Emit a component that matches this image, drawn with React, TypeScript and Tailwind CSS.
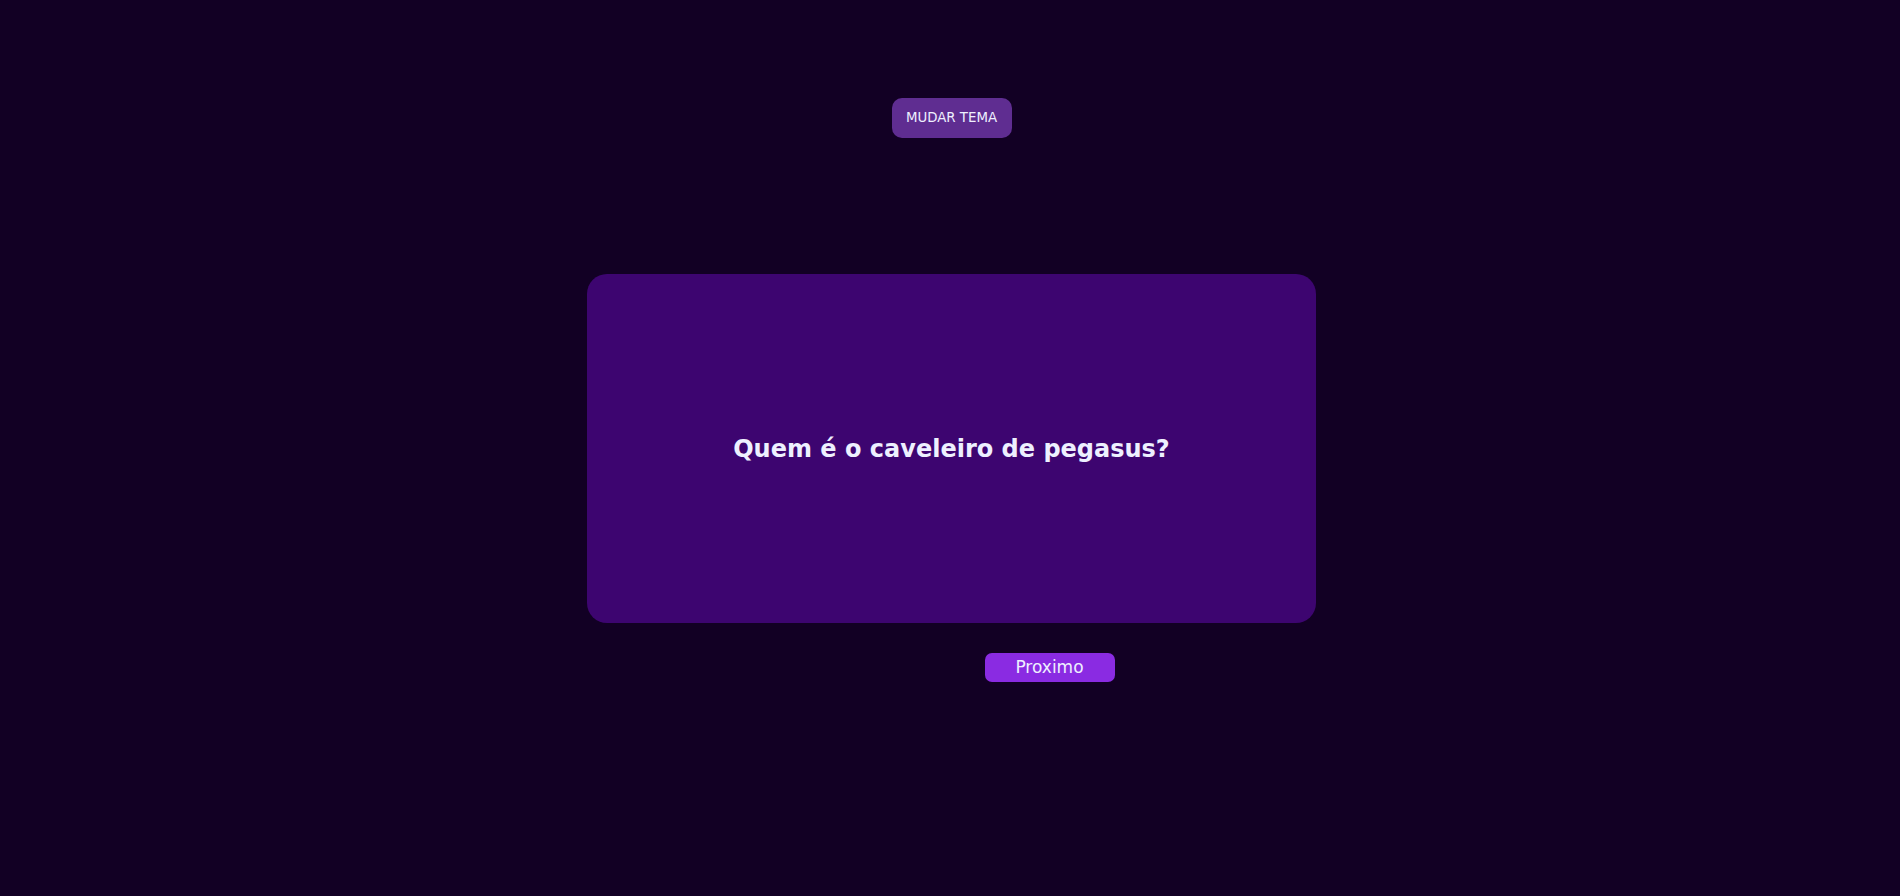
export default function App() {
  return (
    <div
      className="min-h-[896px] w-full bg-[#120024] flex flex-col items-center pl-[3px]"
      style={{ fontFamily: '"DejaVu Sans", Verdana, sans-serif' }}
    >
      <button className="mt-[98px] w-[120px] h-[40px] rounded-[10px] bg-[#5f2d91] text-[#eef0ff] text-[13.333px] tracking-normal">
        MUDAR TEMA
      </button>
      <div className="mt-[136px] w-[729px] h-[349px] rounded-[20px] bg-[#3d0570] flex items-center justify-center">
        <h1 className="text-[24px] font-bold text-[#eef0ff]">Quem é o caveleiro de pegasus?</h1>
      </div>
      <div className="mt-[30px] flex justify-center">
        <button className="ml-[196px] w-[130px] h-[29px] rounded-[7px] bg-[#8a2be2] text-[#eef0ff] text-[17px] leading-none">
          Proximo
        </button>
      </div>
    </div>
  );
}
